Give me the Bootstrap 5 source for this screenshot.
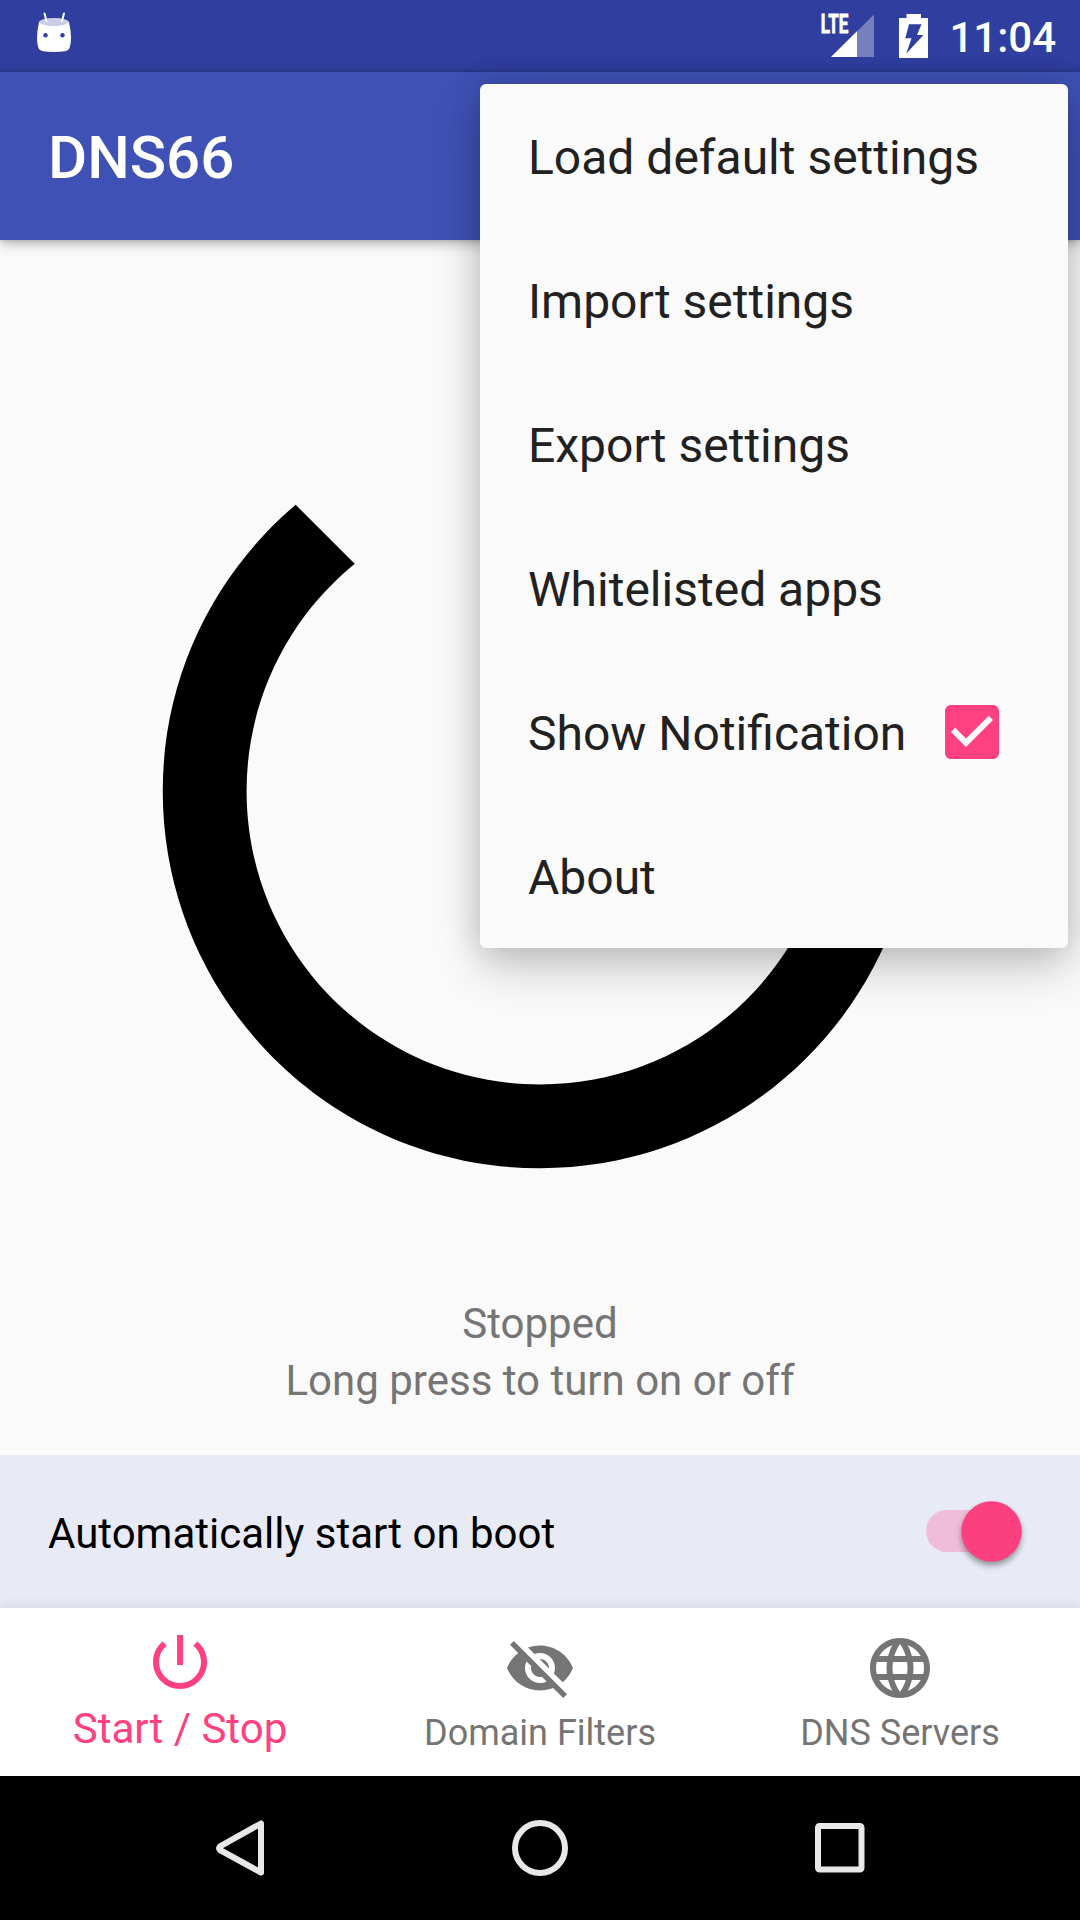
<!DOCTYPE html>
<html lang="en">
<head>
<meta charset="utf-8">
<meta name="viewport" content="width=device-width, initial-scale=1">
<title>DNS66</title>
<link href="https://cdn.jsdelivr.net/npm/bootstrap@5.3.0/dist/css/bootstrap.min.css" rel="stylesheet">
<style>
  body { font-family: Roboto, "Noto Sans", sans-serif; background: #fafafa; color: #000; }
  svg { display: block; }
  .screen { width: 1080px; height: 1920px; }
  .status-bar { height: 72px; background: #303f9f; padding: 0 24px 0 37px; }
  .clock { font-size: 42px; font-weight: 500; line-height: 70px; padding-top: 4px; margin-left: 21px; }
  .app-bar { height: 168px; background: #3f51b5; padding: 0 48px; box-shadow: 0 3px 12px rgba(0,0,0,.32), 0 0 3px rgba(0,0,0,.15); z-index: 1; }
  .app-title { font-size: 60px; font-weight: 500; line-height: 70px; padding-top: 4px; }
  .stage { height: 1215px; padding-top: 48px; }
  .power-art { width: 1006px; height: 1006px; }
  .status-text { font-size: 42px; line-height: 57px; color: #757575; margin-top: 1px; }
  .boot-row { height: 153px; background: #e8eaf6; padding: 0 48px; font-size: 42px; }
  .boot-label { padding-top: 4px; }
  .tab-bar { height: 168px; background: #fff; box-shadow: 0 0 12px rgba(0,0,0,.12); z-index: 1; color: #757575; }
  .tab { font-size: 36px; line-height: 42px; padding-top: 24px; gap: 8px; }
  .tab.active { color: #ff4081; font-size: 42px; line-height: 49px; padding-top: 18px; gap: 6px; }
  .system-nav { height: 144px; background: #000; padding: 0 210px 0 210px; }
  .overflow-menu { --bs-dropdown-bg: #fafafa; left: 480px; top: 84px; width: 588px; padding: 0; border: 0; border-radius: 6px; overflow: visible;
    box-shadow: 0 20px 48px rgba(0,0,0,.2), 0 0 32px rgba(0,0,0,.14); }
  .overflow-menu .dropdown-item { height: 144px; padding: 0 48px; font-size: 48px; line-height: 56px; color: #212121; background: none; }
  .item-label { padding-top: 4px; }
  .check-art { margin-right: 12px; }
</style>
</head>
<body>
<div class="screen position-relative d-flex flex-column overflow-hidden">
  <header class="status-bar d-flex align-items-center justify-content-between text-white">
    <svg width="34" height="44" viewBox="0 0 34 44" style="margin-top:-6px">
      <path d="M2 11Q5 7.500 17 7.500T32 11Q34 20 34 27T32 38Q31 41 17 41T2 38Q0 34 0 27T2 11Z" fill="#fff"/>
      <ellipse cx="17" cy="11" rx="14.500" ry="4" fill="#c9cde8"/>
      <path d="M7.500 2.500l2 7.500M27 2.500L25 10" stroke="#fff" stroke-width="2" stroke-linecap="round"/>
      <circle cx="8.500" cy="24.200" r="2.200" fill="#303f9f"/><circle cx="25.500" cy="24.200" r="2.200" fill="#303f9f"/>
    </svg>
    <div class="d-flex align-items-center">
      <svg width="54" height="72" viewBox="820 0 54 72">
        <text x="820.800" y="33.300" font-size="25.500" font-weight="700" fill="#fff" stroke="#fff" stroke-width=".8" textLength="27.500" lengthAdjust="spacingAndGlyphs">LTE</text>
        <path d="M831 57L874 14.500V57Z" fill="#7780bf"/>
        <path d="M831 57L857 31.300V57Z" fill="#fff"/>
      </svg>
      <svg width="29" height="72" viewBox="899 0 29 72" style="margin-left:25px">
        <path d="M906.500 14H921v4h7v40h-29V18h7.500Z" fill="#fff"/>
        <path d="M909 24.300h12.500L917 35h6.500L906.300 53.500L911.500 38.200H905.300Z" fill="#303f9f"/>
      </svg>
      <span class="clock">11:04</span>
    </div>
  </header>

  <nav class="app-bar d-flex align-items-center position-relative">
    <h1 class="app-title text-white mb-0">DNS66</h1>
  </nav>

  <main class="stage d-flex flex-column align-items-center flex-shrink-0">
    <svg class="power-art flex-shrink-0" viewBox="0 0 24 24"><path d="M13 3h-2v10h2V3zm4.830 2.170l-1.420 1.420C17.990 7.860 19 9.810 19 12c0 3.870-3.130 7-7 7s-7-3.130-7-7c0-2.190 1.010-4.140 2.580-5.420L6.170 5.170C4.230 6.820 3 9.260 3 12c0 4.970 4.030 9 9 9s9-4.030 9-9c0-2.740-1.230-5.180-3.170-6.830z"/></svg>
    <div class="status-text text-center">Stopped<br>Long press to turn on or off</div>
  </main>

  <section class="boot-row d-flex align-items-center justify-content-between flex-shrink-0">
    <span class="boot-label">Automatically start on boot</span>
    <svg width="126" height="90" viewBox="0 0 126 90">
      <defs><filter id="knobShadow" x="-30%" y="-30%" width="160%" height="160%"><feGaussianBlur stdDeviation="3"/></filter></defs>
      <rect x="20" y="23" width="90" height="42" rx="21" fill="#efbdd9"/>
      <circle cx="85.500" cy="48.500" r="30" fill="#000" opacity=".38" filter="url(#knobShadow)"/>
      <circle cx="85.500" cy="44.500" r="30.200" fill="#fc407f"/>
    </svg>
  </section>

  <div class="tab-bar d-flex position-relative flex-shrink-0">
    <div class="tab active col-4 d-flex flex-column align-items-center">
      <svg width="72" height="72" viewBox="0 0 24 24" fill="currentColor"><path d="M13 3h-2v10h2V3zm4.830 2.170l-1.420 1.420C17.990 7.860 19 9.810 19 12c0 3.870-3.130 7-7 7s-7-3.130-7-7c0-2.190 1.010-4.140 2.580-5.420L6.170 5.170C4.230 6.820 3 9.260 3 12c0 4.970 4.030 9 9 9s9-4.030 9-9c0-2.740-1.230-5.180-3.170-6.830z"/></svg>
      <span>Start / Stop</span>
    </div>
    <div class="tab col-4 d-flex flex-column align-items-center">
      <svg width="72" height="72" viewBox="0 0 24 24" fill="currentColor"><path d="M12 7c2.760 0 5 2.240 5 5 0 .65-.13 1.260-.36 1.830l2.920 2.920c1.510-1.260 2.700-2.890 3.430-4.750-1.730-4.390-6-7.500-11-7.500-1.400 0-2.740.25-3.980.7l2.160 2.160C10.740 7.130 11.350 7 12 7zM2 4.270l2.280 2.280.46.46C3.080 8.300 1.780 10.020 1 12c1.730 4.390 6 7.500 11 7.500 1.550 0 3.030-.3 4.380-.84l.42.42L19.730 22 21 20.730 3.270 3 2 4.270zM7.530 9.800l1.550 1.550c-.05.21-.08.43-.08.65 0 1.660 1.340 3 3 3 .22 0 .44-.03.65-.08l1.550 1.550c-.67.33-1.410.53-2.200.53-2.760 0-5-2.240-5-5 0-.79.2-1.530.53-2.200zm4.310-.78l3.150 3.150.02-.16c0-1.660-1.340-3-3-3l-.17.01z"/></svg>
      <span>Domain Filters</span>
    </div>
    <div class="tab col-4 d-flex flex-column align-items-center">
      <svg width="72" height="72" viewBox="0 0 24 24" fill="currentColor"><path d="M11.990 2C6.470 2 2 6.480 2 12s4.470 10 9.990 10C17.520 22 22 17.520 22 12S17.520 2 11.990 2zm6.930 6h-2.950c-.32-1.250-.78-2.450-1.380-3.560 1.840.63 3.370 1.910 4.330 3.560zM12 4.040c.83 1.200 1.480 2.530 1.910 3.960h-3.820c.43-1.430 1.080-2.760 1.910-3.960zM4.260 14C4.100 13.360 4 12.690 4 12s.1-1.360.26-2h3.380c-.08.66-.14 1.320-.14 2 0 .68.06 1.340.14 2H4.260zm.82 2h2.950c.32 1.250.78 2.450 1.380 3.560-1.840-.63-3.370-1.900-4.330-3.560zm2.950-8H5.080c.96-1.660 2.490-2.930 4.330-3.560C8.810 5.550 8.350 6.750 8.030 8zM12 19.960c-.83-1.200-1.480-2.530-1.910-3.960h3.820c-.43 1.430-1.080 2.760-1.910 3.960zM14.340 14H9.660c-.09-.66-.16-1.320-.16-2 0-.68.07-1.350.16-2h4.680c.09.65.16 1.320.16 2 0 .68-.07 1.340-.16 2zm.25 5.560c.6-1.110 1.060-2.310 1.380-3.560h2.950c-.96 1.650-2.490 2.930-4.330 3.560zM16.360 14c.08-.66.14-1.320.14-2 0-.68-.06-1.340-.14-2h3.380c.16.64.26 1.310.26 2s-.1 1.360-.26 2h-3.380z"/></svg>
      <span>DNS Servers</span>
    </div>
  </div>

  <footer class="system-nav d-flex align-items-center justify-content-between flex-shrink-0">
    <svg width="60" height="60" viewBox="0 0 60 60" fill="none" stroke="#e8e8e8" stroke-width="6" stroke-linejoin="round"><path d="M51 5.500V54.500L10 32Q8 30.200 10 28.400Z"/></svg>
    <svg width="60" height="60" viewBox="0 0 60 60" fill="none" stroke="#e8e8e8" stroke-width="6"><circle cx="30" cy="30" r="25"/></svg>
    <svg width="60" height="60" viewBox="0 0 60 60" fill="none" stroke="#e8e8e8" stroke-width="6"><rect x="8" y="8" width="43.500" height="43.500" rx="1.500"/></svg>
  </footer>

  <ul class="overflow-menu dropdown-menu show position-absolute">
    <li><a class="dropdown-item d-flex align-items-center"><span class="item-label">Load default settings</span></a></li>
    <li><a class="dropdown-item d-flex align-items-center"><span class="item-label">Import settings</span></a></li>
    <li><a class="dropdown-item d-flex align-items-center"><span class="item-label">Export settings</span></a></li>
    <li><a class="dropdown-item d-flex align-items-center"><span class="item-label">Whitelisted apps</span></a></li>
    <li><a class="dropdown-item d-flex align-items-center justify-content-between"><span class="item-label">Show Notification</span>
      <svg class="check-art" width="72" height="72" viewBox="0 0 24 24" fill="#ff4081"><path d="M19 3H5c-1.110 0-2 .9-2 2v14c0 1.100.89 2 2 2h14c1.110 0 2-.9 2-2V5c0-1.100-.89-2-2-2zm-9 14l-5-5 1.410-1.410L10 14.170l7.590-7.590L19 8l-9 9z"/></svg></a></li>
    <li><a class="dropdown-item d-flex align-items-center"><span class="item-label">About</span></a></li>
  </ul>
</div>
<script src="https://cdn.jsdelivr.net/npm/bootstrap@5.3.0/dist/js/bootstrap.bundle.min.js"></script>
</body>
</html>
